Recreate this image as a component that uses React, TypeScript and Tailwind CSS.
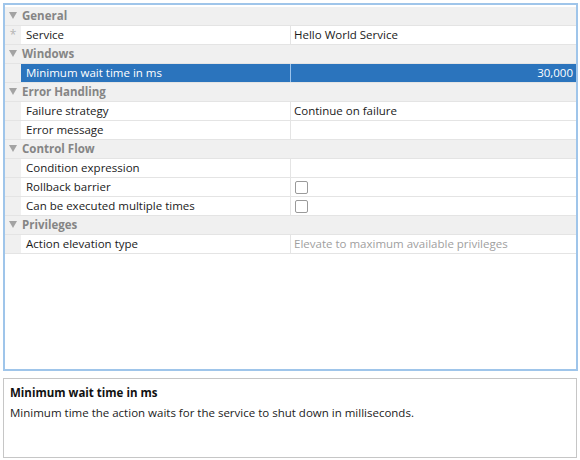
import React from "react";

const font = { fontFamily: '"Open Sans", "Noto Sans", sans-serif' };

function Header({ label }: { label: string }) {
  return (
    <div className="flex h-[19px] items-center border-b border-[#e4e4e4] bg-[#f0f0f0]">
      <svg className="ml-[4px] mr-[5px] mt-[-2px]" width="8" height="8" viewBox="0 0 8 8">
        <polygon points="0,1 8,1 4,8" fill="#a3a3a3" />
      </svg>
      <span className="text-[11.5px] font-bold text-[#858585]">{label}</span>
    </div>
  );
}

function Row({
  name,
  value,
  star,
  selected,
  checkbox,
  muted,
}: {
  name: string;
  value?: string;
  star?: boolean;
  selected?: boolean;
  checkbox?: boolean;
  muted?: boolean;
}) {
  return (
    <div className="flex h-[19px] border-b border-[#e4e4e4]">
      <div className="flex w-[16px] items-center justify-center bg-[#f0f0f0] text-[12px] text-[#b5b5b5]">
        {star ? "*" : ""}
      </div>
      <div
        className={
          "flex w-[270px] items-center border-r pl-[5px] text-[11.5px] " +
          (selected ? "border-[#9cc4ec] bg-[#2b74bd] text-white" : "border-[#e4e4e4] text-[#1a1a1a]")
        }
      >
        {name}
      </div>
      <div
        className={
          "flex flex-1 items-center pl-[3px] pr-[3px] text-[11.5px] " +
          (selected ? "justify-end bg-[#2b74bd] text-white" : muted ? "text-[#a0a0a0]" : "text-[#1a1a1a]")
        }
      >
        {checkbox ? (
          <span className="ml-[1px] block h-[13px] w-[13px] rounded-[2px] border border-[#9a9a9a] bg-white" />
        ) : (
          value
        )}
      </div>
    </div>
  );
}

export default function App() {
  return (
    <div className="h-[460px] w-[580px] bg-white pl-[3px] pt-[3px]" style={font}>
      <div className="h-[368px] w-[575px] border-2 border-[#9fc5ea] bg-white pt-[2px]">
        <Header label="General" />
        <Row name="Service" value="Hello World Service" star />
        <Header label="Windows" />
        <Row name="Minimum wait time in ms" value="30,000" selected />
        <Header label="Error Handling" />
        <Row name="Failure strategy" value="Continue on failure" />
        <Row name="Error message" value="" />
        <Header label="Control Flow" />
        <Row name="Condition expression" value="" />
        <Row name="Rollback barrier" checkbox />
        <Row name="Can be executed multiple times" checkbox />
        <Header label="Privileges" />
        <Row name="Action elevation type" value="Elevate to maximum available privileges" muted />
      </div>
      <div className="mt-[7px] h-[80px] w-[574px] border border-[#c6c6c6] bg-white px-[6px] pt-[5px]">
        <div className="text-[11.5px] font-bold leading-[18px] text-[#111]">Minimum wait time in ms</div>
        <div className="mt-[2px] text-[11.5px] leading-[18px] text-[#222]">
          Minimum time the action waits for the service to shut down in milliseconds.
        </div>
      </div>
    </div>
  );
}
